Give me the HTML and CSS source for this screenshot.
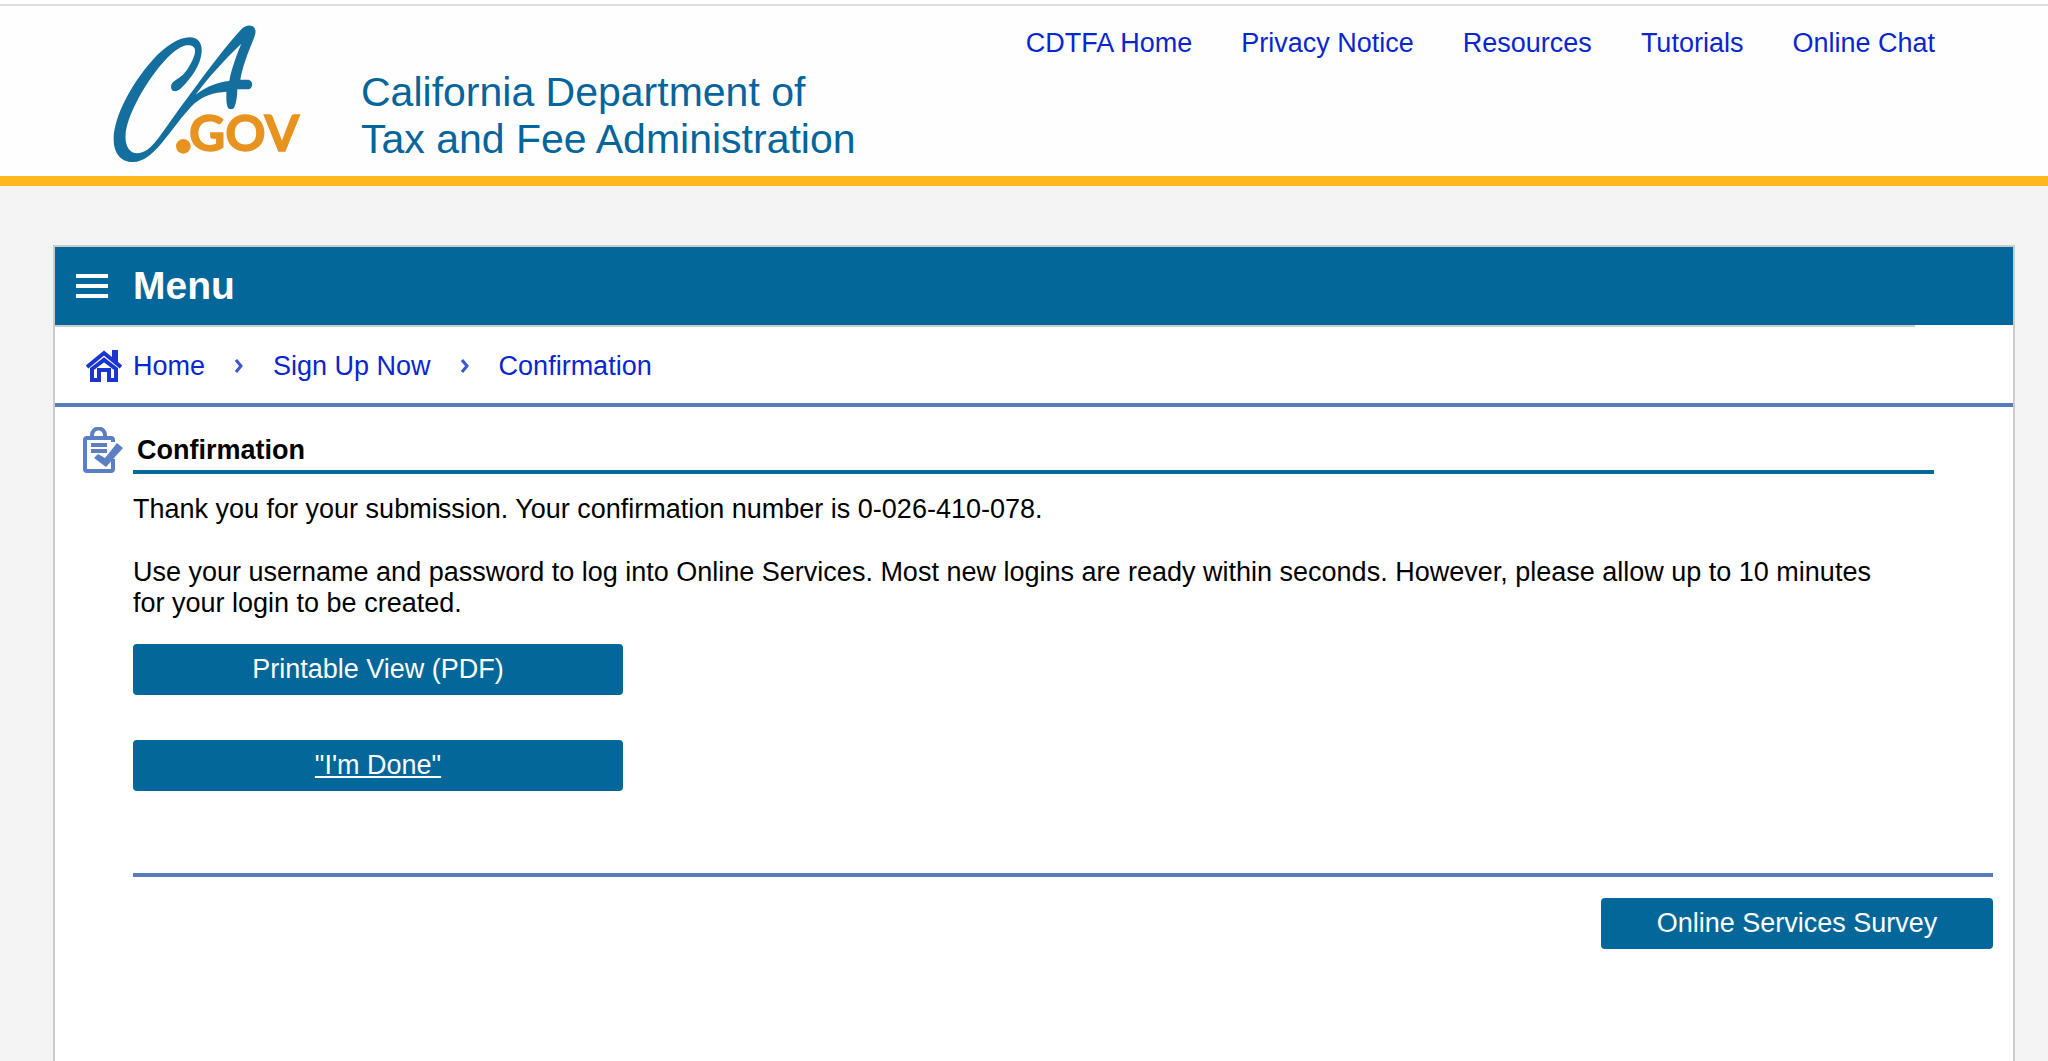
FILE: index.html
```html
<!DOCTYPE html>
<html lang="en">
<head>
<meta charset="utf-8">
<title>Confirmation</title>
<link rel="stylesheet" href="styles.css">
</head>
<body>
<header class="site-header">
  <a class="brand" href="#" aria-label="CA.GOV">
    <svg class="logo" viewBox="30 30 600 444" aria-hidden="true">
      <path class="logo-script" fill-rule="evenodd" d="M213 230C213 212 240 208 256 186C274 162 286 136 285 121C284 106 266 102 246 110C190 132 84 290 77 374C74 406 88 430 112 430C140 430 164 402 190 364C222 318 244 288 287 230C330 172 380 106 424 58C436 46 448 44 458 49C468 55 469 66 462 84C444 128 428 168 421 209L443 209C461 209 461 238 443 238L412 238C412 258 409 278 403 292C400 300 386 300 383 292C378 278 379 262 379 245C340 248 312 256 284 280C250 312 214 366 186 398C156 434 130 455 100 456C62 457 40 428 41 384C43 318 94 222 156 152C196 108 236 82 270 82C294 82 307 100 305 126C303 162 276 202 246 232C230 250 213 246 213 230ZM424 101C372 150 324 204 287 254C320 230 352 216 388 213C392 184 412 128 424 101Z"/>
      <circle class="logo-gov" cx="250" cy="409" r="22"/>
      <text class="logo-gov logo-text" x="267" y="424">GOV</text>
    </svg>
    <span class="agency">California Department of<br>Tax and Fee Administration</span>
  </a>
  <nav class="top-nav">
    <a href="#">CDTFA Home</a>
    <a href="#">Privacy Notice</a>
    <a href="#">Resources</a>
    <a href="#">Tutorials</a>
    <a href="#">Online Chat</a>
  </nav>
</header>
<main class="panel">
  <div class="menu-bar">
    <button class="menu-button" type="button">
      <svg width="32" height="24" viewBox="0 0 32 24" aria-hidden="true"><path d="M0 2H32M0 12H32M0 22H32" stroke="#fff" stroke-width="4"/></svg>
      Menu
    </button>
  </div>
  <div class="divider"></div>
  <nav class="breadcrumb" aria-label="Breadcrumb">
    <a class="home" href="#">
      <svg width="36" height="32" viewBox="0 0 36 32" aria-hidden="true">
        <path d="M6 17L18 7L30 17V22H6Z" fill="#8d9ce8"/>
        <path d="M26 0H32V13L26 8Z" fill="#1a35cf"/>
        <path d="M1 17L18 3L35 17" fill="none" stroke="#1a35cf" stroke-width="4"/>
        <path d="M6 19L18 10L30 19V30H23V20H13V30H6Z" fill="#fff" stroke="#1a35cf" stroke-width="4"/>
      </svg>
      Home</a>
    <svg class="chevron" viewBox="0 0 8 14" aria-hidden="true"><path d="M1 1L6 7L1 13"/></svg>
    <a href="#">Sign Up Now</a>
    <svg class="chevron" viewBox="0 0 8 14" aria-hidden="true"><path d="M1 1L6 7L1 13"/></svg>
    <a href="#">Confirmation</a>
  </nav>
  <section class="content">
    <div class="title-row">
      <svg class="clipboard" width="42" height="48" viewBox="0 0 42 48" aria-hidden="true">
        <path d="M10 11V8a6 6 0 0 1 13 0V11M31 15V13Q31 11 29 11H5Q3 11 3 13V42Q3 44 5 44H29Q31 44 31 42V32M9 18H25M9 24H25" fill="none" stroke="#5b7fc2" stroke-width="4"/>
        <path d="M12 31L16 27L23 31L35 16L41 21L24 40Z" fill="#5b7fc2"/>
      </svg>
      <h1>Confirmation</h1>
    </div>
    <div class="message">
      <p>Thank you for your submission. Your confirmation number is 0-026-410-078.</p>
      <p>Use your username and password to log into Online Services. Most new logins are ready within seconds. However, please allow up to 10 minutes for your login to be created.</p>
    </div>
    <div class="actions">
      <button class="button" type="button">Printable View (PDF)</button>
      <button class="button focused" type="button">"I'm Done"</button>
    </div>
  </section>
  <footer class="panel-footer">
    <button class="button survey" type="button">Online Services Survey</button>
  </footer>
</main>
</body>
</html>
```

FILE: styles.css
```css
* { box-sizing: border-box; }

html { background: #fefefe; }

body {
  margin: 0;
  min-height: 100vh;
  display: flex;
  flex-direction: column;
  border-top: 4px solid #fefefe;
  background: #f4f4f4;
  color: #000;
  font: 27px/31px "Liberation Sans", Arial, sans-serif;
}

a { color: #0a26cf; text-decoration: none; }

.site-header {
  display: flex;
  justify-content: space-between;
  padding: 14px 113px 8px 110px;
  border-top: 2px solid #ddd;
  border-bottom: 10px solid #ffb71e;
  background: #fefefe;
}

.brand { display: flex; gap: 51px; }
.logo { width: 200px; height: 148px; }
.logo-script { fill: #146f9f; }
.logo-gov { fill: #e8931f; }
.logo-text {
  font: bold 150px Lato, sans-serif;
  stroke: #e8931f;
  stroke-width: 4px;
}
.agency {
  padding-top: 49px;
  color: #04659c;
  font-size: 41px;
  line-height: 47px;
}

.top-nav { display: flex; gap: 49px; padding-top: 8px; }

.panel {
  flex: 1;
  margin: 59px 33px 0 53px;
  border: 2px solid #ccc;
  border-bottom: 0;
  background: #fff;
}

.menu-bar { height: 78px; padding-left: 21px; background: #036799; }
.menu-button {
  display: flex;
  align-items: center;
  gap: 25px;
  height: 78px;
  padding: 0;
  border: 0;
  background: none;
  color: #fff;
  font: bold 39px/46px "Liberation Sans", Arial, sans-serif;
}
.divider { height: 2px; margin-right: 98px; background: #ccc; }

.breadcrumb {
  display: flex;
  align-items: center;
  gap: 30px;
  height: 80px;
  padding: 2px 0 0 31px;
  border-bottom: 4px solid #567cbd;
}
.home { display: flex; align-items: center; gap: 11px; }
.chevron { width: 8px; height: 14px; fill: none; stroke: #3a58d0; stroke-width: 3; }

.content { padding: 20px 79px 0 78px; }
.title-row { display: flex; align-items: flex-start; margin-left: -51px; }
.clipboard { margin-right: 9px; }
.title-row h1 {
  flex: 1;
  margin: 0;
  padding: 8px 4px;
  height: 47px;
  border-bottom: 4px solid #036799;
  font-size: 27px;
  line-height: 31px;
}
.message { padding: 19px 32px 25px 0; }
.message p { margin: 0; }
.message p + p { margin-top: 32px; }

.actions { display: flex; flex-direction: column; gap: 45px; }
.button {
  width: 490px;
  height: 51px;
  padding: 0;
  border: 0;
  border-radius: 4px;
  background: #036799;
  color: #fff;
  font: inherit;
}
.focused { text-decoration: underline; }

.panel-footer {
  display: flex;
  justify-content: flex-end;
  margin: 82px 20px 0 78px;
  padding-top: 21px;
  border-top: 4px solid #567cbd;
}
.survey { width: 392px; }
```
